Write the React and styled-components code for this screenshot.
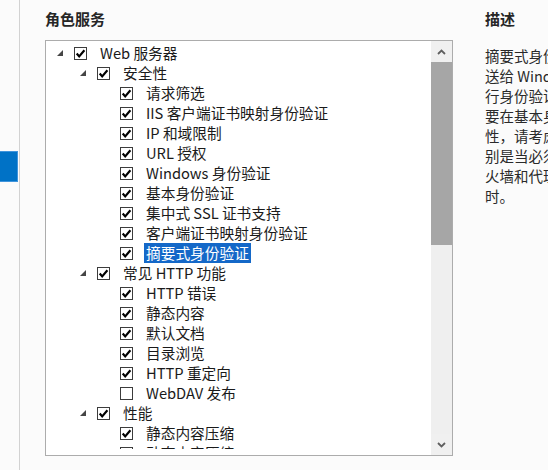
import React from 'react'
import styled, { createGlobalStyle } from 'styled-components'

const GlobalStyle = createGlobalStyle`
  html, body {
    margin: 0;
    padding: 0;
    background: #fbfbfb;
  }
  body {
    font-family: "Noto Sans CJK SC", "Liberation Sans", sans-serif;
    color: #1e1e1e;
  }
`

const Page = styled.div`
  display: flex;
  width: 548px;
  height: 470px;
  overflow: hidden;
  background: #fbfbfb;
`

const LeftRail = styled.div`
  flex: none;
  width: 19px;
  border-right: 1px solid #d2d2d2;
`

const ActiveTab = styled.div`
  margin-top: 151px;
  width: 18px;
  height: 31px;
  box-sizing: border-box;
  background: #0072c6;
  border: 1px solid #3f94dc;
  border-left: none;
`

const Main = styled.div`
  flex: none;
  margin-left: 25px;
  width: 408px;
`

const Heading = styled.h2`
  margin: 0;
  padding-top: 9px;
  height: 20px;
  line-height: 20px;
  font-size: 15px;
  font-weight: bold;
  color: #262626;
  margin-bottom: 11px;
`

const Panel = styled.div`
  box-sizing: border-box;
  width: 408px;
  height: 416px;
  border: 1px solid #acacac;
  background: #fff;
  display: flex;
`

const Tree = styled.div`
  flex: 1;
  overflow: hidden;
  padding-top: 2px;
  margin-bottom: 6px;
`

const Row = styled.div`
  display: flex;
  align-items: center;
  height: 20px;
  padding-left: ${p => p.$level * 23}px;
  white-space: nowrap;
`

const Expander = styled.span`
  flex: none;
  width: 28px;
  height: 20px;
  display: flex;
  align-items: center;
  padding-left: 11px;
  box-sizing: border-box;
`

const Label = styled.span`
  margin-left: 11px;
  padding: 0 2px;
  height: 20px;
  line-height: 20px;
  font-size: 14.7px;
  color: ${p => (p.$selected ? '#fff' : '#1a1a1a')};
  background: ${p => (p.$selected ? '#1468c8' : 'transparent')};
`

const Scrollbar = styled.div`
  flex: none;
  width: 21px;
  background: #efefef;
  display: flex;
  flex-direction: column;
`

const ScrollButton = styled.div`
  height: 21px;
  display: flex;
  align-items: center;
  justify-content: center;
  background: #f0f0f0;
`

const Thumb = styled.div`
  height: 183px;
  background: #a6a6a6;
`

const Track = styled.div`
  flex: 1;
`

const Side = styled.div`
  flex: none;
  margin-left: 32px;
  width: 220px;
`

const DescLine = styled.div`
  height: 20px;
  line-height: 20px;
  font-size: 14.5px;
  color: #2a2a2a;
  white-space: nowrap;
`

const DescBody = styled.div`
  padding-top: 6px;
`

const Triangle = () => (
  <svg width="6" height="6" viewBox="0 0 6 6">
    <polygon points="6,0 6,6 0,6" fill="#454545" />
  </svg>
)

const Checkbox = ({ checked }) => (
  <svg width="13" height="13" viewBox="0 0 13 13" style={{ flex: 'none' }}>
    <rect x="0.5" y="0.5" width="12" height="12" fill="#fff" stroke="#3c3c3c" />
    {checked && (
      <polyline points="2.7,6.5 5.2,9.4 10.4,3.3" fill="none" stroke="#000" strokeWidth="2.2" />
    )}
  </svg>
)

const Chevron = ({ up }) => (
  <svg width="9" height="6" viewBox="0 0 9 6">
    <polyline
      points={up ? '1,5 4.5,1.5 8,5' : '1,1 4.5,4.5 8,1'}
      fill="none"
      stroke="#5f5f5f"
      strokeWidth="1.8"
    />
  </svg>
)

const items = [
  { level: 0, text: 'Web 服务器', parent: true, checked: true },
  { level: 1, text: '安全性', parent: true, checked: true },
  { level: 2, text: '请求筛选', checked: true },
  { level: 2, text: 'IIS 客户端证书映射身份验证', checked: true },
  { level: 2, text: 'IP 和域限制', checked: true },
  { level: 2, text: 'URL 授权', checked: true },
  { level: 2, text: 'Windows 身份验证', checked: true },
  { level: 2, text: '基本身份验证', checked: true },
  { level: 2, text: '集中式 SSL 证书支持', checked: true },
  { level: 2, text: '客户端证书映射身份验证', checked: true },
  { level: 2, text: '摘要式身份验证', checked: true, selected: true },
  { level: 1, text: '常见 HTTP 功能', parent: true, checked: true },
  { level: 2, text: 'HTTP 错误', checked: true },
  { level: 2, text: '静态内容', checked: true },
  { level: 2, text: '默认文档', checked: true },
  { level: 2, text: '目录浏览', checked: true },
  { level: 2, text: 'HTTP 重定向', checked: true },
  { level: 2, text: 'WebDAV 发布', checked: false },
  { level: 1, text: '性能', parent: true, checked: true },
  { level: 2, text: '静态内容压缩', checked: true },
  { level: 2, text: '动态内容压缩', checked: false },
]

const description = [
  '摘要式身份验证通过将密码哈希发',
  '送给 Windows 域控制器来对用户进',
  '行身份验证。如果需要在基本身份',
  '要在基本身份验证的基础上提高安全',
  '性，请考虑使用摘要式身份验证，特',
  '别是当必须通过防火墙和代理服务',
  '火墙和代理服务器访问网站的用户',
  '时。',
]

const App = () => {
  return (
    <Page>
      <GlobalStyle />
      <LeftRail>
        <ActiveTab />
      </LeftRail>
      <Main>
        <Heading>角色服务</Heading>
        <Panel>
          <Tree>
            {items.map((item, i) => (
              <Row key={i} $level={item.level}>
                <Expander>{item.parent && <Triangle />}</Expander>
                <Checkbox checked={item.checked} />
                <Label $selected={item.selected}>{item.text}</Label>
              </Row>
            ))}
          </Tree>
          <Scrollbar>
            <ScrollButton><Chevron up /></ScrollButton>
            <Thumb />
            <Track />
            <ScrollButton><Chevron /></ScrollButton>
          </Scrollbar>
        </Panel>
      </Main>
      <Side>
        <Heading>描述</Heading>
        <DescBody>
          {description.map((line, i) => (
            <DescLine key={i}>{line}</DescLine>
          ))}
        </DescBody>
      </Side>
    </Page>
  )
}

export default App
